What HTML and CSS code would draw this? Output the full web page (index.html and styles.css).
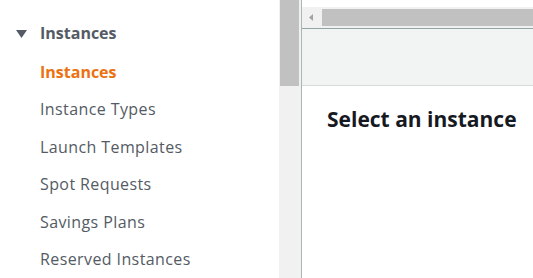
FILE: index.html
```html
<!DOCTYPE html>
<html>
<head>
<meta charset="utf-8">
<link rel="stylesheet" href="styles.css">
</head>
<body>
<div class="page">
  <nav class="sidebar">
    <div class="section-head">
      <svg class="caret" width="11" height="8" viewBox="0 0 11 8"><polygon points="0,0 11,0 5.5,8" fill="#545b64"/></svg>
      <span>Instances</span>
    </div>
    <ul class="nav-list">
      <li class="nav-item active">Instances</li>
      <li class="nav-item">Instance Types</li>
      <li class="nav-item">Launch Templates</li>
      <li class="nav-item">Spot Requests</li>
      <li class="nav-item">Savings Plans</li>
      <li class="nav-item">Reserved Instances</li>
    </ul>
  </nav>
  <div class="vscroll"><div class="vthumb"></div></div>
  <main class="main">
    <div class="top-gap"></div>
    <div class="hscroll">
      <svg class="harrow" width="4" height="7" viewBox="0 0 4 7"><polygon points="4,0 4,7 0,3.5" fill="#a3a3a3"/></svg>
      <div class="hthumb"></div>
    </div>
    <div class="toolbar"></div>
    <div class="detail">
      <h2 class="detail-title">Select an instance</h2>
    </div>
  </main>
</div>
</body>
</html>
```

FILE: styles.css
```css
* { box-sizing: border-box; }
html, body { margin: 0; padding: 0; }
body {
  width: 533px;
  height: 278px;
  overflow: hidden;
  background: #fff;
  font-family: "Open Sans", "Noto Sans", sans-serif;
}
.page {
  display: flex;
  height: 278px;
}
.sidebar {
  width: 279px;
  flex: none;
  background: #fff;
  padding-top: 22px;
}
.section-head {
  display: flex;
  align-items: center;
  height: 22px;
  padding-left: 16px;
  color: #545b64;
  font-weight: 700;
  font-size: 16px;
}
.caret { margin-right: 13px; margin-top: 1px; }
.nav-list {
  list-style: none;
  margin: 0;
  padding: 0 0 0 40px;
  margin-top: 17px;
  display: flex;
  flex-direction: column;
  gap: 15.4px;
}
.nav-item {
  font-size: 16px;
  line-height: 22px;
  color: #545b64;
  white-space: nowrap;
  letter-spacing: 0.4px;
}
.nav-item.active {
  color: #ec7211;
  font-weight: 700;
  letter-spacing: 0;
}
.vscroll {
  width: 22px;
  flex: none;
  background: #f1f1f1;
  padding: 0 2px 0 1px;
}
.vthumb {
  height: 86px;
  background: #c1c1c1;
}
.main {
  flex: 1;
  border-left: 1px solid #aab7b8;
  display: flex;
  flex-direction: column;
  min-width: 0;
}
.top-gap { height: 7px; background: #fff; }
.hscroll {
  height: 22px;
  background: #f1f1f1;
  border-bottom: 1px solid #95a5a6;
  display: flex;
  align-items: center;
  padding: 0 0 1px 7px;
}
.harrow { flex: none; }
.hthumb {
  margin-left: 9px;
  flex: 1;
  height: 17px;
  background: #c1c1c1;
}
.toolbar {
  height: 57px;
  background: #f2f3f3;
  border-bottom: 1px solid #d5dbdb;
}
.detail {
  flex: 1;
  padding: 20px 0 0 25px;
}
.detail-title {
  margin: 0;
  font-size: 21px;
  line-height: 27px;
  font-weight: 700;
  color: #16191f;
}
```
